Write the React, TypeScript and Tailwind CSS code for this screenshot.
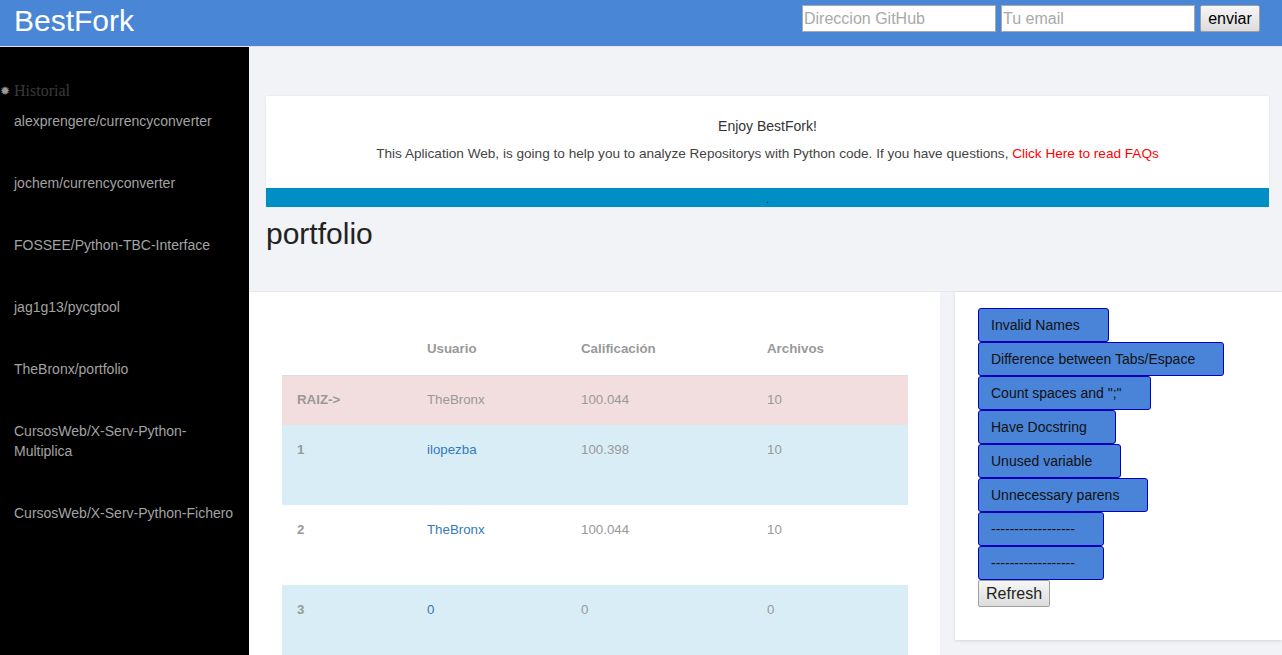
import React from 'react'

const history = [
  'alexprengere/currencyconverter',
  'jochem/currencyconverter',
  'FOSSEE/Python-TBC-Interface',
  'jag1g13/pycgtool',
  'TheBronx/portfolio',
  'CursosWeb/X-Serv-Python-Multiplica',
  'CursosWeb/X-Serv-Python-Fichero',
]

const rows = [
  { id: 'RAIZ->', user: 'TheBronx', score: '100.044', files: '10', bg: 'bg-[#f2dede]', h: 'h-[50px]', pt: 'pt-[14px]', link: false },
  { id: '1', user: 'ilopezba', score: '100.398', files: '10', bg: 'bg-[#d9edf7]', h: 'h-[80px]', pt: 'pt-[15px]', link: true },
  { id: '2', user: 'TheBronx', score: '100.044', files: '10', bg: 'bg-white', h: 'h-[80px]', pt: 'pt-[15px]', link: true },
  { id: '3', user: '0', score: '0', files: '0', bg: 'bg-[#d9edf7]', h: 'h-[80px]', pt: 'pt-[15px]', link: true },
]

const checks = [
  'Invalid Names',
  'Difference between Tabs/Espace',
  'Count spaces and ";"',
  'Have Docstring',
  'Unused variable',
  'Unnecessary parens',
  '------------------',
  '------------------',
]

export default function App() {
  return (
    <div className="flex h-screen flex-col overflow-hidden font-['Liberation_Sans',Arial,sans-serif]">
      <header className="flex h-[47px] shrink-0 items-start justify-between border-b border-[#dfe3ea] bg-[#4a86d6]">
        <h1 className="pl-[14px] pt-[3px] text-[30px] leading-[36px] text-white">BestFork</h1>
        <div className="flex gap-[5px] pr-[22px] pt-[5px]">
          <input
            placeholder="Direccion GitHub"
            className="h-[27px] w-[194px] border border-[#a9a9a9] bg-white px-[1px] text-[16px] text-black placeholder:text-[#a9a9a9] outline-none"
          />
          <input
            placeholder="Tu email"
            className="h-[27px] w-[194px] border border-[#a9a9a9] bg-white px-[1px] text-[16px] text-black placeholder:text-[#a9a9a9] outline-none"
          />
          <button className="h-[27px] w-[60px] rounded-[2px] border border-[#a0a0a0] bg-gradient-to-b from-[#f6f6f6] to-[#dddddd] text-[16px] text-black">
            enviar
          </button>
        </div>
      </header>

      <div className="flex min-h-0 flex-1">
        <aside className="w-[249px] shrink-0 bg-black pr-[14px]">
          <div className="flex items-center pt-[34px] font-['Liberation_Serif',serif] text-[16px] leading-[20px] text-[#3a3a3a]">
            <span className="w-[14px] font-['DejaVu_Sans',sans-serif] text-[12px] leading-[20px] text-[#999]">✹</span>
            Historial
          </div>
          <ul className="pt-[10px]">
            {history.map((h) => (
              <li key={h} className="mb-[42px] pl-[14px] text-[14px] leading-[20px] text-[#a3a3a3]">
                {h}
              </li>
            ))}
          </ul>
        </aside>

        <main className="flex min-w-0 flex-1 flex-col bg-[#f2f3f7]">
          <div className="pl-[17px] pr-[13px] pt-[49px]">
            <div className="bg-white shadow-[0_0_2px_rgba(0,0,0,0.08)]">
              <div className="pb-[24px] pt-[20px] text-center text-[#333]">
                <p className="text-[14px] leading-[20px]">Enjoy BestFork!</p>
                <p className="mt-[8px] text-[13.6px] leading-[20px] text-[#444]">
                  This Aplication Web, is going to help you to analyze Repositorys with Python code. If you have questions,{' '}
                  <a className="text-[#ff0000]">Click Here to read FAQs</a>
                </p>
              </div>
              <div className="h-[19px] bg-[#008fc4] text-center text-[11px] leading-[22px] text-[#222]">.</div>
            </div>
            <h2 className="pt-[9px] text-[30px] leading-[36px] text-[#222]">portfolio</h2>
          </div>

          <div className="mt-[39px] flex min-h-0 flex-1 gap-[15px] border-t border-[#e6e8ec]">
            <section className="w-[691px] shrink-0 bg-white px-[33px] pt-[33px]">
              <table className="w-[626px] border-collapse text-[13.3px] leading-[20px]">
                <thead>
                  <tr className="h-[50px] border-b border-[#dddddd] text-left font-bold text-[#999]">
                    <th className="w-[130px] pb-[2px] pl-[15px]"></th>
                    <th className="w-[154px] pb-[2px] pl-[15px]">Usuario</th>
                    <th className="w-[186px] pb-[2px] pl-[15px]">Calificación</th>
                    <th className="pb-[2px] pl-[15px]">Archivos</th>
                  </tr>
                </thead>
                <tbody>
                  {rows.map((r) => (
                    <tr key={r.id} className={`${r.bg} ${r.h} align-top`}>
                      <td className={`${r.pt} pl-[15px] font-bold text-[#999]`}>{r.id}</td>
                      <td className={`${r.pt} pl-[15px] ${r.link ? 'text-[#337ab7]' : 'text-[#999]'}`}>{r.user}</td>
                      <td className={`${r.pt} pl-[15px] text-[#999]`}>{r.score}</td>
                      <td className={`${r.pt} pl-[15px] text-[#999]`}>{r.files}</td>
                    </tr>
                  ))}
                </tbody>
              </table>
            </section>

            <section className="flex-1 self-start bg-white pb-[33px] pl-[23px] pt-[16px] shadow-[0_1px_3px_rgba(0,0,0,0.12)]">
              <div className="flex flex-col items-start">
                {checks.map((c, i) => (
                  <button
                    key={i}
                    className="h-[34px] rounded-[3px] border border-[#0000b8] bg-[#4a84d8] pl-[12px] pr-[28px] text-left text-[14px] text-[#111]"
                  >
                    {c}
                  </button>
                ))}
                <button className="h-[27px] rounded-[2px] border border-[#a0a0a0] bg-gradient-to-b from-[#f6f6f6] to-[#dddddd] px-[7px] text-[16px] text-[#222]">
                  Refresh
                </button>
              </div>
            </section>
          </div>
        </main>
      </div>
    </div>
  )
}
